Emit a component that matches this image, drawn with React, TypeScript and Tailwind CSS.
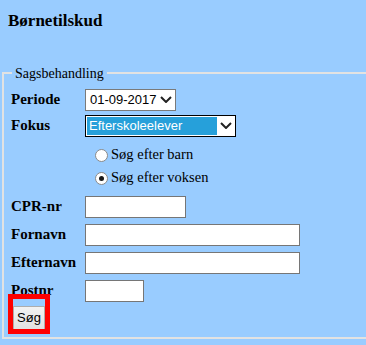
import React from "react";

const serif = "font-['Liberation_Serif','Times_New_Roman',serif]";
const sans = "font-['Liberation_Sans',Arial,sans-serif]";

function Chevron() {
  return (
    <svg width="12" height="7" viewBox="0 0 12 7" className="block">
      <polyline points="1,1 6,6 11,1" fill="none" stroke="#222" strokeWidth="2" />
    </svg>
  );
}

function Label({ children }: { children: React.ReactNode }) {
  return <div className={`w-[74px] shrink-0 text-[15px] font-bold text-black ${serif}`}>{children}</div>;
}

function TextBox({ width }: { width: string }) {
  return <input type="text" className={`h-[22px] ${width} border border-[#767676] bg-white outline-none`} />;
}

function Radio({ checked, label }: { checked?: boolean; label: string }) {
  return (
    <div className="flex h-[23px] items-center pl-[84px]">
      <span className="flex h-[13px] w-[13px] items-center justify-center rounded-full border border-[#8a8a8a] bg-white">
        {checked && <span className="h-[5px] w-[5px] rounded-full bg-[#1a1a1a]" />}
      </span>
      <span className={`ml-[3px] text-[14.5px] text-black ${serif}`}>{label}</span>
    </div>
  );
}

export default function App() {
  return (
    <div className="relative h-[345px] w-[366px] overflow-hidden bg-[#99ccff]">
      <h1 className={`pl-[8px] pt-[8px] text-[17px] font-bold text-black ${serif}`}>Børnetilskud</h1>

      <fieldset className="ml-[2px] mt-[29px] w-[400px] border-2 border-[#e2e2e2] pb-[7px] pl-[7px]">
        <legend className={`ml-[1px] px-[3px] text-[14px] text-black ${serif}`}>Sagsbehandling</legend>

        <div className="mt-[5px] flex h-[22px] items-center">
          <Label>Periode</Label>
          <div className={`flex h-[22px] w-[91px] items-center justify-between border border-[#7a7a7a] bg-white pl-[4px] pr-[3px] text-[13px] text-black ${sans}`}>
            <span>01-09-2017</span>
            <Chevron />
          </div>
        </div>

        <div className="mt-[4px] flex h-[22px] items-center">
          <Label>Fokus</Label>
          <div className={`flex h-[22px] w-[151px] items-center border border-black bg-white p-[1px] text-[13px] ${sans}`}>
            <span className="flex h-full w-[130px] items-center bg-[#26a0da] pl-[2px] text-white">Efterskoleelever</span>
            <span className="flex flex-1 justify-center">
              <Chevron />
            </span>
          </div>
        </div>

        <div className="mt-[7px]">
          <Radio label="Søg efter barn" />
          <Radio checked label="Søg efter voksen" />
        </div>

        <div className="mt-[6px] flex h-[22px] items-center">
          <Label>CPR-nr</Label>
          <TextBox width="w-[101px]" />
        </div>
        <div className="mt-[6px] flex h-[22px] items-center">
          <Label>Fornavn</Label>
          <TextBox width="w-[215px]" />
        </div>
        <div className="mt-[6px] flex h-[22px] items-center">
          <Label>Efternavn</Label>
          <TextBox width="w-[215px]" />
        </div>
        <div className="mt-[6px] flex h-[22px] items-center">
          <Label>Postnr</Label>
          <TextBox width="w-[59px]" />
        </div>

        <button
          className={`ml-[2px] mt-[4px] block h-[24px] w-[32px] border border-[#adadad] bg-gradient-to-b from-[#f2f2f2] to-[#e1e1e1] text-[13px] text-black ${sans}`}
        >
          Søg
        </button>
      </fieldset>

      {/* red highlight box drawn over the search button */}
      <div className="pointer-events-none absolute left-[8px] top-[294px] h-[40px] w-[42px] border-[5px] border-[#ff0000]" />
    </div>
  );
}
